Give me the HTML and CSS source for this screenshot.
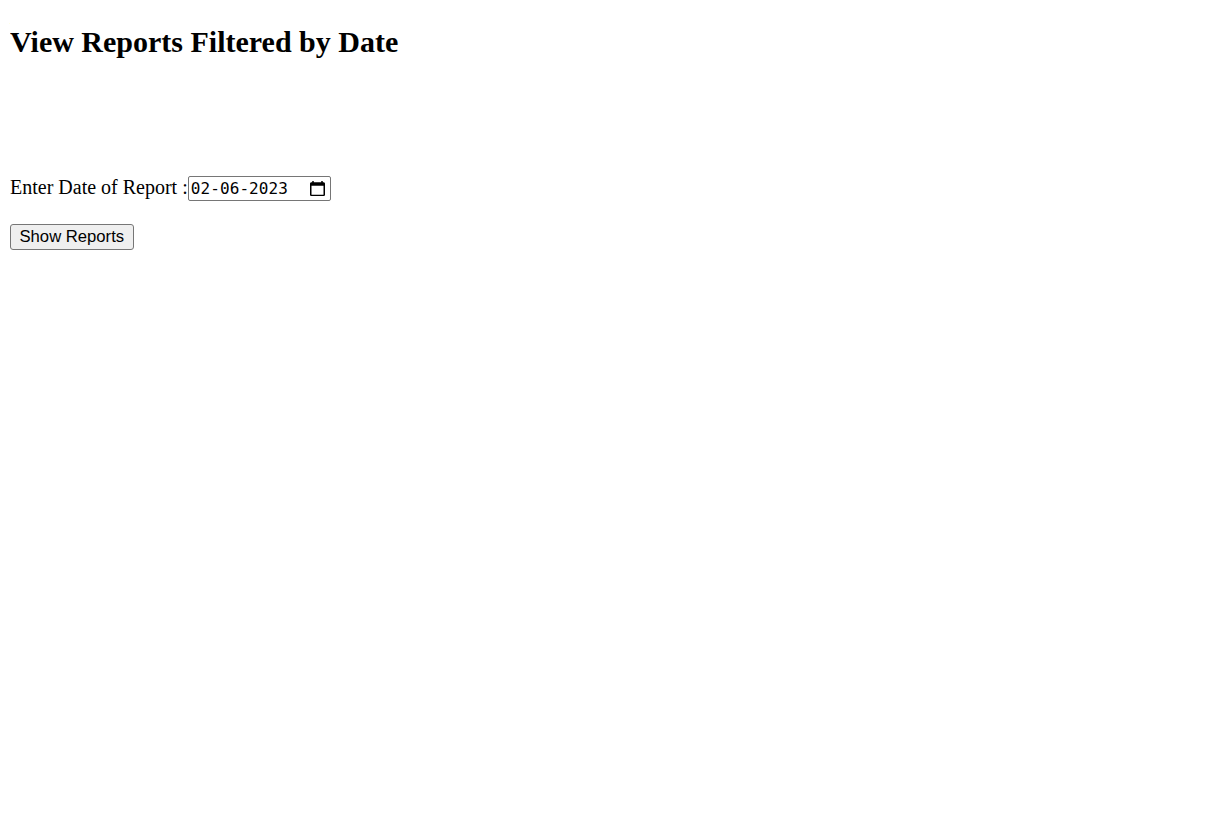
FILE: index.html
```html
<!DOCTYPE html>
<html>
<head>
<meta charset="utf-8">
<title>View Reports</title>
<link rel="stylesheet" href="styles.css">
</head>
<body>
<h2 class="title">View Reports Filtered by Date</h2>
<form class="report-form">
  <div class="field">
    <label class="field-label" for="d">Enter Date of Report :</label><span class="date-box"><input class="date-input" type="text" id="d" value="02-06-2023" readonly><svg class="cal-icon" width="15" height="15" viewBox="2 1 20 22" preserveAspectRatio="none" aria-hidden="true"><path d="M20 3h-1V1h-2v2H7V1H5v2H4c-1.1 0-2 .9-2 2v16c0 1.1.9 2 2 2h16c1.1 0 2-.9 2-2V5c0-1.1-.9-2-2-2zm0 18H4V8h16v13z" fill="#000"/></svg></span>
  </div>
  <div class="actions">
    <button class="show-btn" type="button">Show Reports</button>
  </div>
</form>
</body>
</html>
```
FILE: styles.css
```css
body {
  margin: 10px;
  font-family: "Liberation Serif", "Times New Roman", serif;
  font-size: 20px;
  color: #000;
  background: #fff;
}
.title {
  font-size: 30px;
  font-weight: bold;
  line-height: normal;
  margin: 15px 0 0;
}
.report-form {
  margin-top: 117px;
}
.field {
  display: flex;
  align-items: baseline;
}
.field-label {
  line-height: normal;
}
.date-box {
  display: inline-flex;
  align-items: center;
  height: 25px;
  width: 143px;
  box-sizing: border-box;
  border: 1px solid #767676;
  border-radius: 2px;
  padding-left: 2px;
  padding-right: 5px;
  background: #fff;
}
.date-input {
  flex: 1;
  min-width: 0;
  border: none;
  outline: none;
  padding: 0;
  margin: 0;
  height: 23px;
  background: transparent;
  font-family: "DejaVu Sans Mono", "Liberation Mono", monospace;
  font-size: 16px;
  letter-spacing: 0.1px;
  color: #000;
}
.cal-icon {
  flex: none;
  display: block;
}
.actions {
  margin-top: 23px;
}
.show-btn {
  font-family: "Liberation Sans", Arial, sans-serif;
  font-size: 16.67px;
  padding: 0 8.5px;
  height: 26px;
  border: 1px solid #767676;
  border-radius: 3px;
  background: #efefef;
  color: #000;
  margin: 0;
}
```
